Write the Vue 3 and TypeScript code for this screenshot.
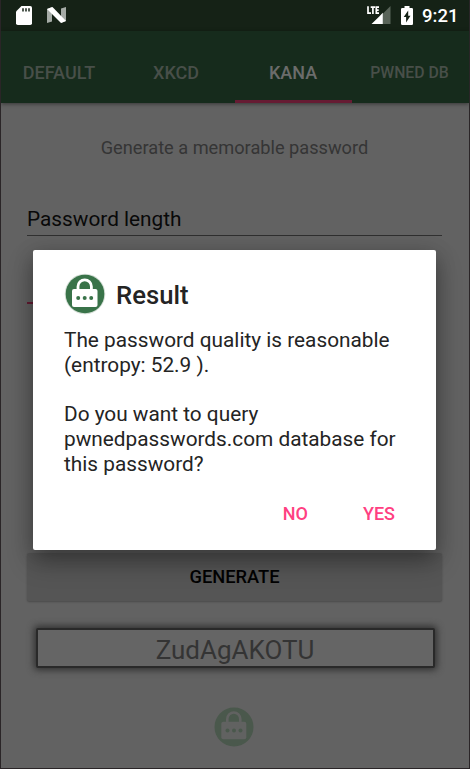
<script setup lang="ts">
import { ref } from 'vue'

interface Tab {
  id: string
  label: string
}

const tabs: Tab[] = [
  { id: 'default', label: 'DEFAULT' },
  { id: 'xkcd', label: 'XKCD' },
  { id: 'kana', label: 'KANA' },
  { id: 'pwned', label: 'PWNED DB' },
]
const active = ref('kana')
const dialogOpen = ref(true)
const password = ref('ZudAgAKOTU')
const entropy = ref(52.9)
</script>

<template>
  <div class="screen">
    <header class="status">
      <svg class="sd" width="16" height="19" viewBox="0 0 16 19">
        <path fill="#fff" d="M5.500 0H14.200Q16 0 16 1.800V17.200Q16 19 14.200 19H1.800Q0 19 0 17.200V5.500Z" />
        <path stroke="#152216" stroke-width="1.500" d="M7 2.300V5.500M10 2.300V5.500M13 2.300V5.500" />
      </svg>
      <svg class="nougat" width="19" height="16" viewBox="0 0 19 16">
        <path fill="#a5aba6" d="M0 2L5 0V14.500L0 16ZM14 1.500L19 0V14L14 16Z" />
        <path fill="#fff" d="M0 2L5.500 0L19 14L14 16Z" />
      </svg>
      <svg class="signal" width="24" height="20" viewBox="0 0 24 20">
        <path fill="#596459" d="M23.500 0V18H15.500V8Z" />
        <path fill="#fff" d="M4.500 18L12.500 10.200L15.800 6.800V18Z" />
        <path fill="none" stroke="#fff" stroke-width="1.700" d="M1 .2V7.200H4M3.700 1.100H8.100M5.900 1.100V8.100M12 1.100H9.300V7.200H12M9.300 4.200H11.700" />
      </svg>
      <svg class="battery" width="12" height="19" viewBox="0 0 12 19">
        <path fill="#fff" d="M3.500 0H8.500V2H10.800Q12 2 12 3.200V17.800Q12 19 10.800 19H1.200Q0 19 0 17.800V3.200Q0 2 1.200 2H3.500Z" />
        <path fill="#152216" d="M7.200 4.600L2.700 11H5.100V16.400L9.500 9.800H7.200Z" />
      </svg>
      <span class="clock">9:21</span>
    </header>

    <nav class="tabs">
      <button
        v-for="tab in tabs"
        :key="tab.id"
        class="tab"
        :class="[tab.id, { active: tab.id === active }]"
        @click="active = tab.id"
      >{{ tab.label }}</button>
    </nav>

    <main class="content">
      <p class="intro">Generate a memorable password</p>
      <div class="field">Password length</div>
      <div class="entry"></div>
      <button class="generate" @click="dialogOpen = true">GENERATE</button>
      <div class="output">{{ password }}</div>
      <svg class="badge" width="40" height="40" viewBox="0 0 40 40">
        <circle cx="20" cy="20" r="19.500" fill="#4a584c" />
        <path fill="none" stroke="#616261" stroke-width="2.600" d="M13.300 15V12a6.500 6.500 0 0 1 13 0V15" />
        <rect x="7.300" y="14.800" width="25" height="17.500" rx="2" fill="#616261" />
        <g fill="#4a584c"><circle cx="13.500" cy="23.500" r="2" /><circle cx="20" cy="23.500" r="2" /><circle cx="26.500" cy="23.500" r="2" /></g>
      </svg>
    </main>

    <section v-if="dialogOpen" class="dialog" role="dialog">
      <div class="heading">
        <svg width="42" height="42" viewBox="0 0 42 42">
          <circle cx="21" cy="21" r="20.300" fill="#d5dfd7" />
          <circle cx="21" cy="21" r="19.300" fill="#397349" />
          <path fill="none" stroke="#fff" stroke-width="2.800" d="M14 17V13.500a6.700 6.700 0 0 1 13.400 0V17" />
          <rect x="8" y="16" width="25.500" height="18" rx="2" fill="#fff" />
          <g fill="#397349"><circle cx="14.200" cy="25" r="2" /><circle cx="20.700" cy="25" r="2" /><circle cx="27.200" cy="25" r="2" /></g>
        </svg>
        <h1>Result</h1>
      </div>
      <p>The password quality is reasonable<br />(entropy: {{ entropy }} ).</p>
      <p>Do you want to query<br />pwnedpasswords.com database for<br />this password?</p>
      <div class="actions">
        <button @click="dialogOpen = false">NO</button>
        <button @click="dialogOpen = false">YES</button>
      </div>
    </section>
  </div>
</template>

<style>
body {
  margin: 0;
}
</style>

<style scoped>
.screen {
  position: relative;
  box-sizing: border-box;
  width: 470px;
  height: 769px;
  overflow: hidden;
  border: solid #2a2527;
  border-width: 0 1px 1px;
  background: #626262;
  font-family: Roboto, "Liberation Sans", sans-serif;
}
button {
  margin: 0;
  padding: 0;
  border: 0;
  background: none;
  font-family: inherit;
  font-weight: 500;
}
.status {
  display: flex;
  box-sizing: border-box;
  height: 31px;
  padding: 6px 11px 0 15px;
  background: #152216;
}
.nougat {
  margin: 1px 0 0 15px;
}
.signal {
  margin-left: auto;
}
.battery {
  margin-left: 10px;
}
.clock {
  width: 36px;
  margin-left: 9px;
  color: #fff;
  font-size: 18.500px;
  font-weight: 500;
  line-height: 21px;
  white-space: nowrap;
}
.tabs {
  display: grid;
  grid-template-columns: repeat(4, 117px);
  height: 72px;
  background: #162b1c;
  box-shadow: 0 1px 4px rgba(0, 0, 0, 0.45);
}
.tab {
  box-sizing: border-box;
  padding: 14px 1px 0 0;
  border-bottom: 3px solid transparent;
  color: #484f49;
  font-size: 18px;
}
.tab.pwned {
  padding-right: 2px;
  font-size: 15.800px;
}
.tab.active {
  border-color: #661b33;
  color: #6b6c6b;
}
.content {
  display: flex;
  flex-direction: column;
  padding: 32px 27px 0 26px;
}
.intro {
  margin: 0;
  color: #353535;
  font-size: 18.200px;
  line-height: 26px;
  text-align: center;
}
.field {
  box-sizing: border-box;
  height: 38px;
  margin-top: 37px;
  padding-top: 7px;
  border-bottom: 1px solid #303030;
  color: #090909;
  font-size: 20.800px;
  line-height: 28px;
}
.entry {
  width: 200px;
  height: 66px;
  border-bottom: 2px solid #661b33;
}
.generate {
  height: 48px;
  margin: 249px 0 0;
  border-radius: 2px;
  background: #555;
  box-shadow: 0 1px 2px rgba(0, 0, 0, 0.25);
  color: #020202;
  font-size: 18.300px;
  line-height: 48px;
}
.output {
  box-sizing: border-box;
  height: 40px;
  margin: 27px 7px 0 9px;
  padding-right: 1px;
  border: 2px solid #292929;
  border-radius: 2px;
  background: #656565;
  box-shadow: 0 0 7px 2px #303030;
  color: #343434;
  font-size: 26px;
  line-height: 40px;
  text-align: center;
}
.badge {
  margin: 39px 1px 0 0;
  align-self: center;
}
.dialog {
  position: absolute;
  top: 250px;
  left: 32px;
  box-sizing: border-box;
  width: 403px;
  height: 300px;
  padding: 23px 31px 0;
  border-radius: 2px;
  background: #fff;
  box-shadow: 0 12px 26px rgba(0, 0, 0, 0.3), 0 4px 20px rgba(0, 0, 0, 0.2);
  color: #242424;
}
.heading {
  display: flex;
  align-items: center;
  gap: 10px;
  margin-bottom: 13px;
}
h1 {
  margin: 2px 0 0;
  font-size: 25.700px;
  font-weight: 500;
  line-height: 34px;
}
.dialog p {
  margin: 0 0 24.800px;
  font-size: 20.800px;
  line-height: 24.800px;
  white-space: nowrap;
}
.dialog p + p {
  margin-bottom: 12px;
}
.actions {
  display: flex;
  justify-content: flex-end;
  gap: 55px;
  padding-right: 10px;
}
.actions button {
  color: #ff4081;
  font-size: 18px;
  line-height: 50px;
}
</style>
